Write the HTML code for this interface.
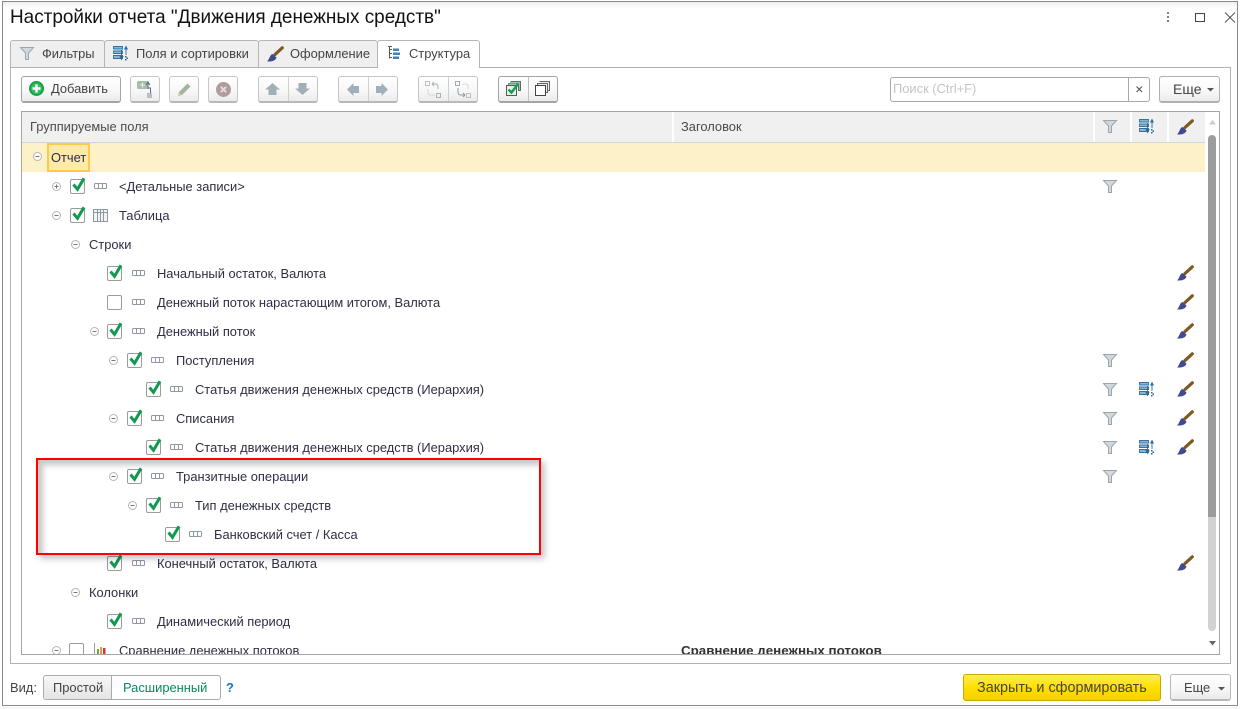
<!DOCTYPE html>
<html lang="ru"><head><meta charset="utf-8"><title>Настройки отчета</title>
<style>
html,body{margin:0;padding:0;background:#fff}
#p{position:relative;width:1240px;height:709px;overflow:hidden;background:#fff;font:12.900px "Liberation Sans",sans-serif;color:#333}
.a{position:absolute}
.t{position:absolute;white-space:nowrap;line-height:16px;color:#444}
.r{color:#2f2f45}
.b{position:absolute;box-sizing:border-box;border:1px solid #c6c6c6;border-bottom:2px solid #b8b8b8;border-radius:3px;background:linear-gradient(#fff,#f8f8f8 55%,#ebebeb)}
.tab{position:absolute;box-sizing:border-box;top:40px;height:27px;border:1px solid #b5b5b5;border-bottom:0;border-radius:3px 3px 0 0;background:#efefef}
svg{position:absolute;overflow:visible}
</style></head><body><div id="p">
<svg width="0" height="0" style="position:absolute"><defs>
<g id="funnel"><path d="M.5 .5H13.500L8.500 6V12.500H5.500V6Z" fill="#d3d8dc" stroke="#9aa5ae"/></g>
<g id="sort"><path d="M.5 .5H9.500V3H.5ZM.5 5H9.500V7.500H.5ZM.5 9.500H9.500V12.500H.5Z" fill="#8db4d2" stroke="#33719f" stroke-width=".9"/><path d="M8.500 4V12M6.800 10L8.500 13.500L10.200 10" fill="#2e6b9b" stroke="#2e6b9b" stroke-width=".9"/><path d="M13 9V1.500M11.500 3.500L13 .5L14.500 3.500" fill="#2e6b9b" stroke="#2e6b9b" stroke-width=".9"/><path d="M12 10h1.500v1.500h-1.500zM13.500 11.500h1.500v1.500h-1.500zM12 13h1.500v1.500h-1.500z" fill="#2e6b9b"/></g>
<g id="brush"><path d="M8 8.500L15.300 1.800" fill="none" stroke="#7d5a22" stroke-width="3.200" stroke-linecap="round"/><path d="M5.500 8C2.500 9 2.800 13 0 15.500C4 15.800 8.800 15 9.500 11.500Z" fill="#414a8c"/></g>
<g id="chk"><rect x=".5" y=".5" width="14" height="14" rx="1.500" fill="#fff" stroke="#9b9b9b"/></g>
<g id="ok"><rect x=".5" y=".5" width="14" height="14" rx="1.500" fill="#fff" stroke="#9b9b9b"/><path d="M3.500 5.500L7.500 10.300L14 -.7" fill="none" stroke="#0f9a50" stroke-width="3"/></g>
<g id="fld"><rect x=".5" y=".5" width="12" height="5" rx="1" fill="#fff" stroke="#8f98a3"/><path d="M4.500 .5V5.500M8.500 .5V5.500" stroke="#8f98a3"/></g>
<g id="minus"><circle cx="4.500" cy="4.500" r="4" fill="#fff" stroke="#b5b5b5"/><path d="M2.500 4.500H6.500" stroke="#777"/></g>
<g id="plus"><circle cx="4.500" cy="4.500" r="4" fill="#fff" stroke="#b5b5b5"/><path d="M2.500 4.500H6.500M4.500 2.500V6.500" stroke="#777"/></g>
<g id="arrU"><path d="M7.500 0L15 6.500H11.500V12H3.500V6.500H0Z" fill="#a3afb6"/></g>
<g id="arrD"><path d="M7.500 12L15 5.500H11.500V0H3.500V5.500H0Z" fill="#a3afb6"/></g>
<g id="arrL"><path d="M0 6.500L6.500 0V3H12V10H6.500V13Z" fill="#a3afb6"/></g>
<g id="arrR"><path d="M12 6.500L5.500 0V3H0V10H5.500V13Z" fill="#a3afb6"/></g>
</defs></svg>

<!-- window -->
<div class="a" style="left:2px;top:1px;width:1236px;height:705px;box-sizing:border-box;border:1px solid #8a8a8a"></div>
<div class="a" style="left:0;top:707px;width:1240px;height:2px;background:#f7f7f7"></div>
<div class="a" style="left:3px;top:2px;width:1234px;height:7px;background:linear-gradient(#f0f0f0,#fff)"></div>
<div class="t" style="left:10px;top:7px;font-size:18.950px;line-height:22px;color:#111">Настройки отчета "Движения денежных средств"</div>
<svg style="left:1165px;top:12px" width="66" height="14"><path d="M2 0h2v2h-2zM2 4h2v2h-2zM2 8h2v2h-2z" fill="#808080"/><rect x="30.500" y="1.500" width="9" height="8" fill="#fff" stroke="#444"/><path d="M60 .5L70 10.500M70 .5L60 10.500" stroke="#555" fill="none"/></svg>

<!-- tab panel -->
<div class="a" style="left:10px;top:67px;width:1221px;height:597px;box-sizing:border-box;border:1px solid #b2b2b2"></div>
<div class="tab" style="left:10px;width:95px"></div>
<div class="tab" style="left:104px;width:155px"></div>
<div class="tab" style="left:258px;width:120px"></div>
<div class="tab" style="left:377px;width:103px;background:#fff;height:28px"></div>
<svg style="left:20px;top:47px" width="14" height="14"><use href="#funnel"/></svg>
<div class="t" style="left:42px;top:46px">Фильтры</div>
<svg style="left:113px;top:46px" width="18" height="15"><use href="#sort"/></svg>
<div class="t" style="left:136px;top:46px">Поля и сортировки</div>
<svg style="left:267px;top:46px" width="17" height="16"><use href="#brush"/></svg>
<div class="t" style="left:290px;top:46px">Оформление</div>
<svg style="left:387px;top:45px" width="14" height="15"><path d="M1 1.500H5M2.500 1.500V13.500M2.500 4.500H5M2.500 8.500H5M2.500 12.500H5" stroke="#555" fill="none"/><path d="M6 3.500h6v2.500h-6zM6 7.500h7v2.500h-7zM6 11.500h6v2.500h-6z" fill="#3f84b5"/></svg>
<div class="t" style="left:409px;top:46px">Структура</div>

<!-- toolbar -->
<div class="b" style="left:21px;top:76px;width:100px;height:27px;border-color:#a5a5a5"></div>
<svg style="left:29px;top:81px" width="15" height="15"><circle cx="7.500" cy="7.500" r="7.500" fill="#14a24c"/><circle cx="7.500" cy="7.500" r="5.500" fill="#3cb95f"/><path d="M7.500 3.500V11.500M3.500 7.500H11.500" stroke="#fff" stroke-width="2.400"/></svg>
<div class="t" style="left:51px;top:81px">Добавить</div>

<div class="b" style="left:130px;top:76px;width:30px;height:27px"></div>
<svg style="left:137px;top:80px" width="17" height="18"><rect x="0" y="1" width="11" height="8" rx="1.500" fill="#a5bda9"/><path d="M5.500 2.500V7.500M3 5H8" stroke="#eee"/><path d="M11 3V9M9 5L11 2L13 5M11 8H13.500V13" stroke="#667" fill="none"/><rect x="10" y="13" width="5" height="5" fill="#b7bfc4"/></svg>
<div class="b" style="left:169px;top:76px;width:30px;height:27px"></div>
<svg style="left:176px;top:82px" width="16" height="16"><path d="M3 10L11.500 1.500L14.500 4.500L6 13L2 14Z" fill="#a2b59b"/><path d="M2 14L3 10.500L5.500 13Z" fill="#d8c8a8"/></svg>
<div class="b" style="left:208px;top:76px;width:30px;height:27px"></div>
<svg style="left:216px;top:82px" width="15" height="15"><circle cx="7.500" cy="7.500" r="7.500" fill="#b19c9c"/><path d="M4.800 4.800L10.200 10.200M10.200 4.800L4.800 10.200" stroke="#ddd" stroke-width="2"/></svg>

<div class="b" style="left:258px;top:76px;width:60px;height:27px"></div>
<div class="a" style="left:288px;top:77px;width:1px;height:24px;background:#d0d0d0"></div>
<svg style="left:265px;top:83px" width="15" height="12"><use href="#arrU"/></svg>
<svg style="left:295px;top:83px" width="15" height="12"><use href="#arrD"/></svg>
<div class="b" style="left:338px;top:76px;width:60px;height:27px"></div>
<div class="a" style="left:368px;top:77px;width:1px;height:24px;background:#d0d0d0"></div>
<svg style="left:347px;top:83px" width="12" height="13"><use href="#arrL"/></svg>
<svg style="left:376px;top:83px" width="12" height="13"><use href="#arrR"/></svg>

<div class="b" style="left:418px;top:76px;width:60px;height:27px"></div>
<div class="a" style="left:448px;top:77px;width:1px;height:24px;background:#d0d0d0"></div>
<svg style="left:425px;top:81px" width="17" height="17"><rect x=".5" y=".5" width="4" height="4" fill="none" stroke="#c0c0c0"/><path d="M7 3H11Q13 3 13 6V8M7 3L9 1M7 3L9 5" fill="none" stroke="#a6b0b6"/><path d="M3 8V11Q3 14 6 14H10" fill="none" stroke="#cfd8dc"/><rect x="11.500" y="12.500" width="4" height="4" fill="none" stroke="#b0b0b0"/></svg>
<svg style="left:455px;top:81px" width="17" height="17"><rect x=".5" y=".5" width="4" height="4" fill="none" stroke="#a8a8a8"/><path d="M7 3H11Q13 3 13 6V8" fill="none" stroke="#cfd8dc"/><path d="M3 7V11Q3 14 6 14H10M10 14L8 12M10 14L8 16" fill="none" stroke="#8e9aa2"/><rect x="11.500" y="12.500" width="4" height="4" fill="none" stroke="#c0c0c0"/></svg>

<div class="b" style="left:498px;top:76px;width:60px;height:27px;border-color:#a5a5a5"></div>
<div class="a" style="left:528px;top:77px;width:1px;height:24px;background:#c0c0c0"></div>
<svg style="left:506px;top:81px" width="15" height="15"><path d="M4.500 .5H14.500V9.500H12.500V2.500H2.500V4" fill="#9fc6ad" stroke="#5a6f66"/><rect x="2.500" y="2.500" width="10" height="2" fill="#9fc6ad"/><rect x=".5" y="4.500" width="10" height="10" fill="#e8f0ea" stroke="#4f5e58"/><path d="M2.500 8.500L5.500 11.500L12 3" fill="none" stroke="#10a04f" stroke-width="2.400"/></svg>
<svg style="left:535px;top:81px" width="15" height="15"><path d="M4.500 .5H14.500V9.500H12.500M2.500 4V2.500H12.500V11.500H10.500" fill="#ececec" stroke="#666"/><rect x=".5" y="4.500" width="10" height="10" fill="#fff" stroke="#444"/></svg>

<!-- search -->
<div class="a" style="left:890px;top:77px;width:260px;height:25px;box-sizing:border-box;border:1px solid #a8a8a8;border-radius:3px;background:#fff"></div>
<div class="a" style="left:1128px;top:78px;width:1px;height:23px;background:#a8a8a8"></div>
<div class="t" style="left:893px;top:81px;color:#c4c4c8">Поиск (Ctrl+F)</div>
<svg style="left:1135px;top:85px" width="10" height="10"><path d="M1.500 1.500L7 7M7 1.500L1.500 7" stroke="#555" stroke-width="1.100"/></svg>
<div class="b" style="left:1159px;top:76px;width:61px;height:27px;border-color:#b0b0b0"></div>
<div class="t" style="left:1173px;top:81px;font-size:14px">Еще</div>
<svg style="left:1207px;top:88px" width="7" height="4"><path d="M0 0H7L3.500 3.500Z" fill="#555"/></svg>

<!-- table -->
<div class="a" style="left:21px;top:111px;width:1199px;height:544px;box-sizing:border-box;border:1px solid #a6a6a6"></div>
<div class="a" style="left:22px;top:112px;width:1183px;height:30px;background:#f0f0f0;border-bottom:1px solid #d4d4d4"></div>
<div class="a" style="left:672px;top:112px;width:2px;height:30px;background:#fff"></div>
<div class="a" style="left:1093px;top:112px;width:2px;height:30px;background:#fff"></div>
<div class="a" style="left:1130px;top:112px;width:2px;height:30px;background:#fff"></div>
<div class="a" style="left:1167px;top:112px;width:2px;height:30px;background:#fff"></div>
<div class="t" style="left:30px;top:119px;color:#4c4c4c">Группируемые поля</div>
<div class="t" style="left:681px;top:119px;color:#4c4c4c">Заголовок</div>
<svg style="left:1103px;top:120px" width="14" height="14"><use href="#funnel"/></svg>
<svg style="left:1139px;top:119px" width="17" height="15"><use href="#sort"/></svg>
<svg style="left:1177px;top:119px" width="17" height="16"><use href="#brush"/></svg>
<div class="a" style="left:22px;top:143px;width:1183px;height:29px;background:#fdf1c8"></div>
<div class="a" style="left:47px;top:143px;width:43px;height:29px;box-sizing:border-box;border:2px solid #fbc94b;background:#fde9a8"></div>

<!-- scrollbar -->
<svg style="left:1209px;top:120px" width="7" height="5"><path d="M3.500 0L7 4.500H0Z" fill="#ccc"/></svg>
<div class="a" style="left:1208px;top:135px;width:8px;height:382px;background:#9c9c9c;border-radius:4px 4px 0 0"></div>
<div class="a" style="left:1208px;top:517px;width:8px;height:114px;background:#d2d2d2;border-radius:0 0 4px 4px"></div>
<svg style="left:1209px;top:641px" width="7" height="5"><path d="M0 0H7L3.500 4.500Z" fill="#666"/></svg>

<!-- rows -->
<svg style="left:33px;top:152px" width="9" height="9"><use href="#minus"/></svg>
<div class="t r" style="left:51px;top:150px">Отчет</div>

<svg style="left:52px;top:182px" width="9" height="9"><use href="#plus"/></svg>
<svg style="left:70px;top:179px" width="15" height="15"><use href="#ok"/></svg>
<svg style="left:94px;top:183px" width="13" height="6"><use href="#fld"/></svg>
<div class="t r" style="left:119px;top:179px">&lt;Детальные записи&gt;</div>
<svg style="left:1103px;top:180px" width="14" height="14"><use href="#funnel"/></svg>

<svg style="left:52px;top:211px" width="9" height="9"><use href="#minus"/></svg>
<svg style="left:70px;top:208px" width="15" height="15"><use href="#ok"/></svg>
<svg style="left:93px;top:209px" width="15" height="13"><rect x=".5" y=".5" width="14" height="12" fill="#f4f4f4" stroke="#8f98a3"/><path d="M.5 3.500H14.500M4.500 .5V12.500M7.500 .5V12.500M10.500 .5V12.500" stroke="#8f98a3"/></svg>
<div class="t r" style="left:119px;top:208px">Таблица</div>

<svg style="left:71px;top:240px" width="9" height="9"><use href="#minus"/></svg>
<div class="t r" style="left:89px;top:237px">Строки</div>

<svg style="left:107px;top:266px" width="15" height="15"><use href="#ok"/></svg>
<svg style="left:132px;top:270px" width="13" height="6"><use href="#fld"/></svg>
<div class="t r" style="left:157px;top:266px">Начальный остаток, Валюта</div>
<svg style="left:1177px;top:265px" width="17" height="16"><use href="#brush"/></svg>

<svg style="left:107px;top:295px" width="15" height="15"><use href="#chk"/></svg>
<svg style="left:132px;top:299px" width="13" height="6"><use href="#fld"/></svg>
<div class="t r" style="left:157px;top:295px">Денежный поток нарастающим итогом, Валюта</div>
<svg style="left:1177px;top:294px" width="17" height="16"><use href="#brush"/></svg>

<svg style="left:90px;top:327px" width="9" height="9"><use href="#minus"/></svg>
<svg style="left:107px;top:324px" width="15" height="15"><use href="#ok"/></svg>
<svg style="left:132px;top:328px" width="13" height="6"><use href="#fld"/></svg>
<div class="t r" style="left:157px;top:324px">Денежный поток</div>
<svg style="left:1177px;top:323px" width="17" height="16"><use href="#brush"/></svg>

<svg style="left:109px;top:356px" width="9" height="9"><use href="#minus"/></svg>
<svg style="left:127px;top:353px" width="15" height="15"><use href="#ok"/></svg>
<svg style="left:151px;top:357px" width="13" height="6"><use href="#fld"/></svg>
<div class="t r" style="left:176px;top:353px">Поступления</div>
<svg style="left:1103px;top:354px" width="14" height="14"><use href="#funnel"/></svg>
<svg style="left:1177px;top:352px" width="17" height="16"><use href="#brush"/></svg>

<svg style="left:146px;top:382px" width="15" height="15"><use href="#ok"/></svg>
<svg style="left:170px;top:386px" width="13" height="6"><use href="#fld"/></svg>
<div class="t r" style="left:195px;top:382px">Статья движения денежных средств (Иерархия)</div>
<svg style="left:1103px;top:383px" width="14" height="14"><use href="#funnel"/></svg>
<svg style="left:1139px;top:382px" width="17" height="15"><use href="#sort"/></svg>
<svg style="left:1177px;top:381px" width="17" height="16"><use href="#brush"/></svg>

<svg style="left:109px;top:414px" width="9" height="9"><use href="#minus"/></svg>
<svg style="left:127px;top:411px" width="15" height="15"><use href="#ok"/></svg>
<svg style="left:151px;top:415px" width="13" height="6"><use href="#fld"/></svg>
<div class="t r" style="left:176px;top:411px">Списания</div>
<svg style="left:1103px;top:412px" width="14" height="14"><use href="#funnel"/></svg>
<svg style="left:1177px;top:410px" width="17" height="16"><use href="#brush"/></svg>

<svg style="left:146px;top:440px" width="15" height="15"><use href="#ok"/></svg>
<svg style="left:170px;top:444px" width="13" height="6"><use href="#fld"/></svg>
<div class="t r" style="left:195px;top:440px">Статья движения денежных средств (Иерархия)</div>
<svg style="left:1103px;top:441px" width="14" height="14"><use href="#funnel"/></svg>
<svg style="left:1139px;top:440px" width="17" height="15"><use href="#sort"/></svg>
<svg style="left:1177px;top:439px" width="17" height="16"><use href="#brush"/></svg>

<svg style="left:109px;top:472px" width="9" height="9"><use href="#minus"/></svg>
<svg style="left:127px;top:469px" width="15" height="15"><use href="#ok"/></svg>
<svg style="left:151px;top:473px" width="13" height="6"><use href="#fld"/></svg>
<div class="t r" style="left:176px;top:469px">Транзитные операции</div>
<svg style="left:1103px;top:470px" width="14" height="14"><use href="#funnel"/></svg>

<svg style="left:128px;top:501px" width="9" height="9"><use href="#minus"/></svg>
<svg style="left:146px;top:498px" width="15" height="15"><use href="#ok"/></svg>
<svg style="left:170px;top:502px" width="13" height="6"><use href="#fld"/></svg>
<div class="t r" style="left:195px;top:498px">Тип денежных средств</div>

<svg style="left:165px;top:527px" width="15" height="15"><use href="#ok"/></svg>
<svg style="left:189px;top:531px" width="13" height="6"><use href="#fld"/></svg>
<div class="t r" style="left:214px;top:527px">Банковский счет / Касса</div>

<svg style="left:107px;top:556px" width="15" height="15"><use href="#ok"/></svg>
<svg style="left:132px;top:560px" width="13" height="6"><use href="#fld"/></svg>
<div class="t r" style="left:157px;top:556px">Конечный остаток, Валюта</div>
<svg style="left:1177px;top:555px" width="17" height="16"><use href="#brush"/></svg>

<svg style="left:71px;top:588px" width="9" height="9"><use href="#minus"/></svg>
<div class="t r" style="left:89px;top:585px">Колонки</div>

<svg style="left:107px;top:614px" width="15" height="15"><use href="#ok"/></svg>
<svg style="left:132px;top:618px" width="13" height="6"><use href="#fld"/></svg>
<div class="t r" style="left:157px;top:614px">Динамический период</div>

<div class="a" style="left:22px;top:640px;width:1183px;height:14px;overflow:hidden">
<svg style="left:30px;top:6px" width="9" height="9"><use href="#minus"/></svg>
<svg style="left:47px;top:3px" width="15" height="15"><use href="#chk"/></svg>
<svg style="left:72px;top:3px" width="13" height="12"><path d="M.5 0V12H13" fill="none" stroke="#999"/><rect x="3" y="6" width="2" height="6" fill="#6aa84f"/><rect x="6" y="4" width="2" height="8" fill="#e0a040"/><rect x="9" y="5" width="2.500" height="7" fill="#d33"/></svg>
<div class="t r" style="left:97px;top:3px">Сравнение денежных потоков</div>
<div class="t" style="left:659px;top:3px;font-weight:bold;font-size:13.350px;color:#333">Сравнение денежных потоков</div>
</div>

<!-- red highlight -->
<div class="a" style="left:36px;top:458px;width:505px;height:97px;box-sizing:border-box;border:2px solid #f00;box-shadow:4px 4px 6px rgba(0,0,0,.22),inset 5px 5px 6px rgba(0,0,0,.22)"></div>

<!-- footer -->
<div class="t" style="left:10px;top:680px">Вид:</div>
<div class="a" style="left:43px;top:675px;width:178px;height:25px;box-sizing:border-box;border:1px solid #aaa;border-radius:3px;background:#fff"></div>
<div class="a" style="left:44px;top:676px;width:67px;height:23px;border-right:1px solid #aaa;background:linear-gradient(#f8f8f8,#e4e4e4);border-radius:2px 0 0 2px"></div>
<div class="t" style="left:53px;top:680px">Простой</div>
<div class="t" style="left:123px;top:680px;color:#0d8a5a">Расширенный</div>
<div class="t" style="left:226px;top:680px;color:#1a75bb;font-weight:bold">?</div>
<div class="a" style="left:963px;top:674px;width:198px;height:27px;box-sizing:border-box;border:1px solid #c9a800;border-radius:3px;background:linear-gradient(#ffec50,#ffe000 50%,#f5d000)"></div>
<div class="t" style="left:977px;top:680px;color:#444;font-size:14.400px">Закрыть и сформировать</div>
<div class="b" style="left:1170px;top:674px;width:61px;height:27px;border-color:#b8b8b8"></div>
<div class="t" style="left:1184px;top:680px">Еще</div>
<svg style="left:1218px;top:687px" width="7" height="4"><path d="M0 0H7L3.500 3.500Z" fill="#555"/></svg>
</div></body></html>
